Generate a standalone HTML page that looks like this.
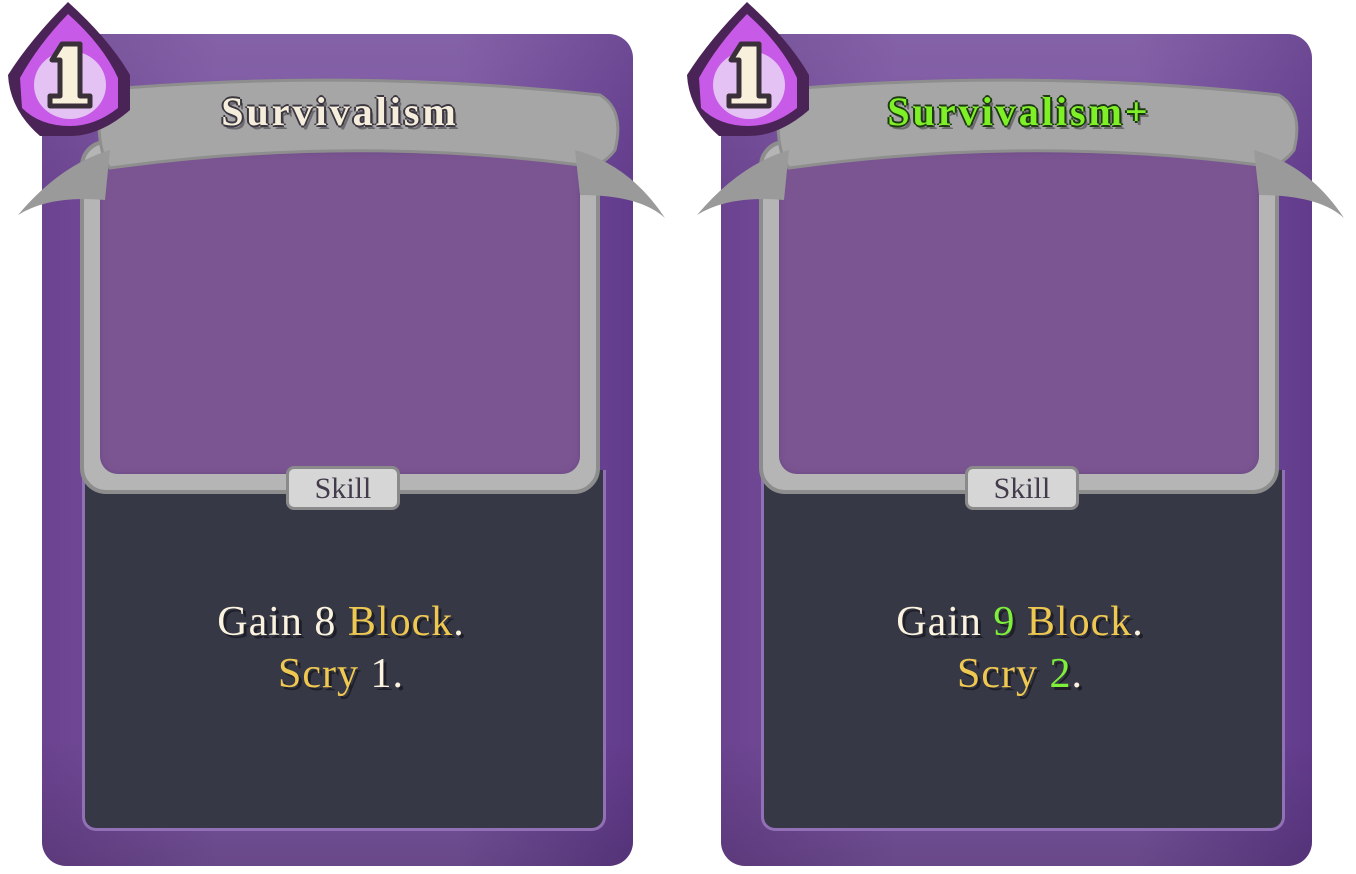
<!DOCTYPE html>
<html><head><meta charset="utf-8"><style>
body{margin:0;width:1356px;height:874px;background:#fff;position:relative;overflow:hidden;font-family:"Liberation Serif",serif}
.card{position:absolute;top:0;width:680px;height:874px}
.outer{position:absolute;left:42px;top:34px;width:591px;height:832px;border-radius:24px;background:linear-gradient(90deg,#6b4390 0%,#7a55a0 30%,#7a55a0 70%,#623b8c 100%)}
.outer2{position:absolute;left:42px;top:34px;width:591px;height:832px;border-radius:24px;background:linear-gradient(180deg,rgba(255,255,255,.08),rgba(0,0,0,0) 20%,rgba(0,0,0,0) 85%,rgba(0,0,0,.15))}
.dark{position:absolute;left:82px;top:470px;width:518px;height:358px;border-radius:0 0 14px 14px;background:#363846;border:3px solid #9270b6;border-top:none}
.frame{position:absolute;left:80px;top:140px;width:520px;height:354px;border-radius:26px;background:#b5b5b5;border:4px solid #8d8d8d;box-sizing:border-box}
.art{position:absolute;left:100px;top:152px;width:480px;height:322px;border-radius:18px;background:#7a5591;box-shadow:inset 0 0 6px #6b4785}
.skill{position:absolute;left:286px;top:466px;width:114px;height:44px;border-radius:8px;background:#d6d6d6;border:3px solid #8a8a8a;box-sizing:border-box;text-align:center;font-size:30px;line-height:40px;color:#433b4b}
.title{position:absolute;left:60px;width:560px;top:88px;text-align:center;font-size:40px;font-weight:bold;letter-spacing:3px}
.desc{position:absolute;left:82px;width:518px;top:596px;text-align:center;font-size:42px;line-height:52px;letter-spacing:1px;color:#fbf3e0;text-shadow:3px 3px 0 #1e1f28}
.g{color:#efc851}.gr{color:#7ff03a}
</style></head><body>

<div class="card" style="left:0">
<div class="outer"></div><div class="outer2"></div>
<div class="dark"></div>
<div class="frame"></div>
<div class="art"></div>
<svg style="position:absolute;left:0;top:0" width="680" height="240">
<path d="M100 90 Q350 68 600 95 Q625 110 615 150 Q600 170 580 165 Q350 135 110 168 Q95 150 100 90Z" fill="#a6a6a6" stroke="#8e8e8e" stroke-width="3"/>
<path d="M110 150 Q60 165 18 215 Q50 195 105 200 Z" fill="#9a9a9a"/>
<path d="M575 150 Q630 165 665 218 Q640 195 580 195 Z" fill="#9a9a9a"/>
<path d="M68 2 Q110 40 130 75 L130 110 Q100 136 70 136 L40 136 Q10 110 8 75 Q30 40 68 2Z" fill="#4a2456"/>
<path d="M68 14 Q103 45 118 78 L118 108 Q95 126 70 126 Q40 126 22 108 L20 78 Q38 45 68 14Z" fill="#c85ae8"/>
<ellipse cx="70" cy="85" rx="36" ry="34" fill="#e4c2f4"/>
<path d="M62 44 L80 44 L80 96 L90 96 L90 106 L50 106 L50 96 L60 96 L60 60 L52 60Z" fill="#f9f0dc" stroke="#3a3039" stroke-width="5" stroke-linejoin="round"/>
</svg>
<div class="title" style="color:#f5eedc;text-shadow:-2px 0 #3b3640,2px 0 #3b3640,0 -2px #3b3640,0 2px #3b3640,3px 4px 0 #6d6a70">Survivalism</div>
<div class="skill">Skill</div>
<div class="desc">Gain 8 <span class="g">Block</span>.<br><span class="g">Scry</span> 1.</div>
</div>

<div class="card" style="left:679px">
<div class="outer"></div><div class="outer2"></div>
<div class="dark"></div>
<div class="frame"></div>
<div class="art"></div>
<svg style="position:absolute;left:0;top:0" width="680" height="240">
<path d="M100 90 Q350 68 600 95 Q625 110 615 150 Q600 170 580 165 Q350 135 110 168 Q95 150 100 90Z" fill="#a6a6a6" stroke="#8e8e8e" stroke-width="3"/>
<path d="M110 150 Q60 165 18 215 Q50 195 105 200 Z" fill="#9a9a9a"/>
<path d="M575 150 Q630 165 665 218 Q640 195 580 195 Z" fill="#9a9a9a"/>
<path d="M68 2 Q110 40 130 75 L130 110 Q100 136 70 136 L40 136 Q10 110 8 75 Q30 40 68 2Z" fill="#4a2456"/>
<path d="M68 14 Q103 45 118 78 L118 108 Q95 126 70 126 Q40 126 22 108 L20 78 Q38 45 68 14Z" fill="#c85ae8"/>
<ellipse cx="70" cy="85" rx="36" ry="34" fill="#e4c2f4"/>
<path d="M62 44 L80 44 L80 96 L90 96 L90 106 L50 106 L50 96 L60 96 L60 60 L52 60Z" fill="#f9f0dc" stroke="#3a3039" stroke-width="5" stroke-linejoin="round"/>
</svg>
<div class="title" style="color:#7ff028;text-shadow:-2px 0 #1d3a12,2px 0 #1d3a12,0 -2px #1d3a12,0 2px #1d3a12,3px 4px 0 #6d6a70">Survivalism+</div>
<div class="skill">Skill</div>
<div class="desc">Gain <span class="gr">9</span> <span class="g">Block</span>.<br><span class="g">Scry</span> <span class="gr">2</span>.</div>
</div>

</body></html>
